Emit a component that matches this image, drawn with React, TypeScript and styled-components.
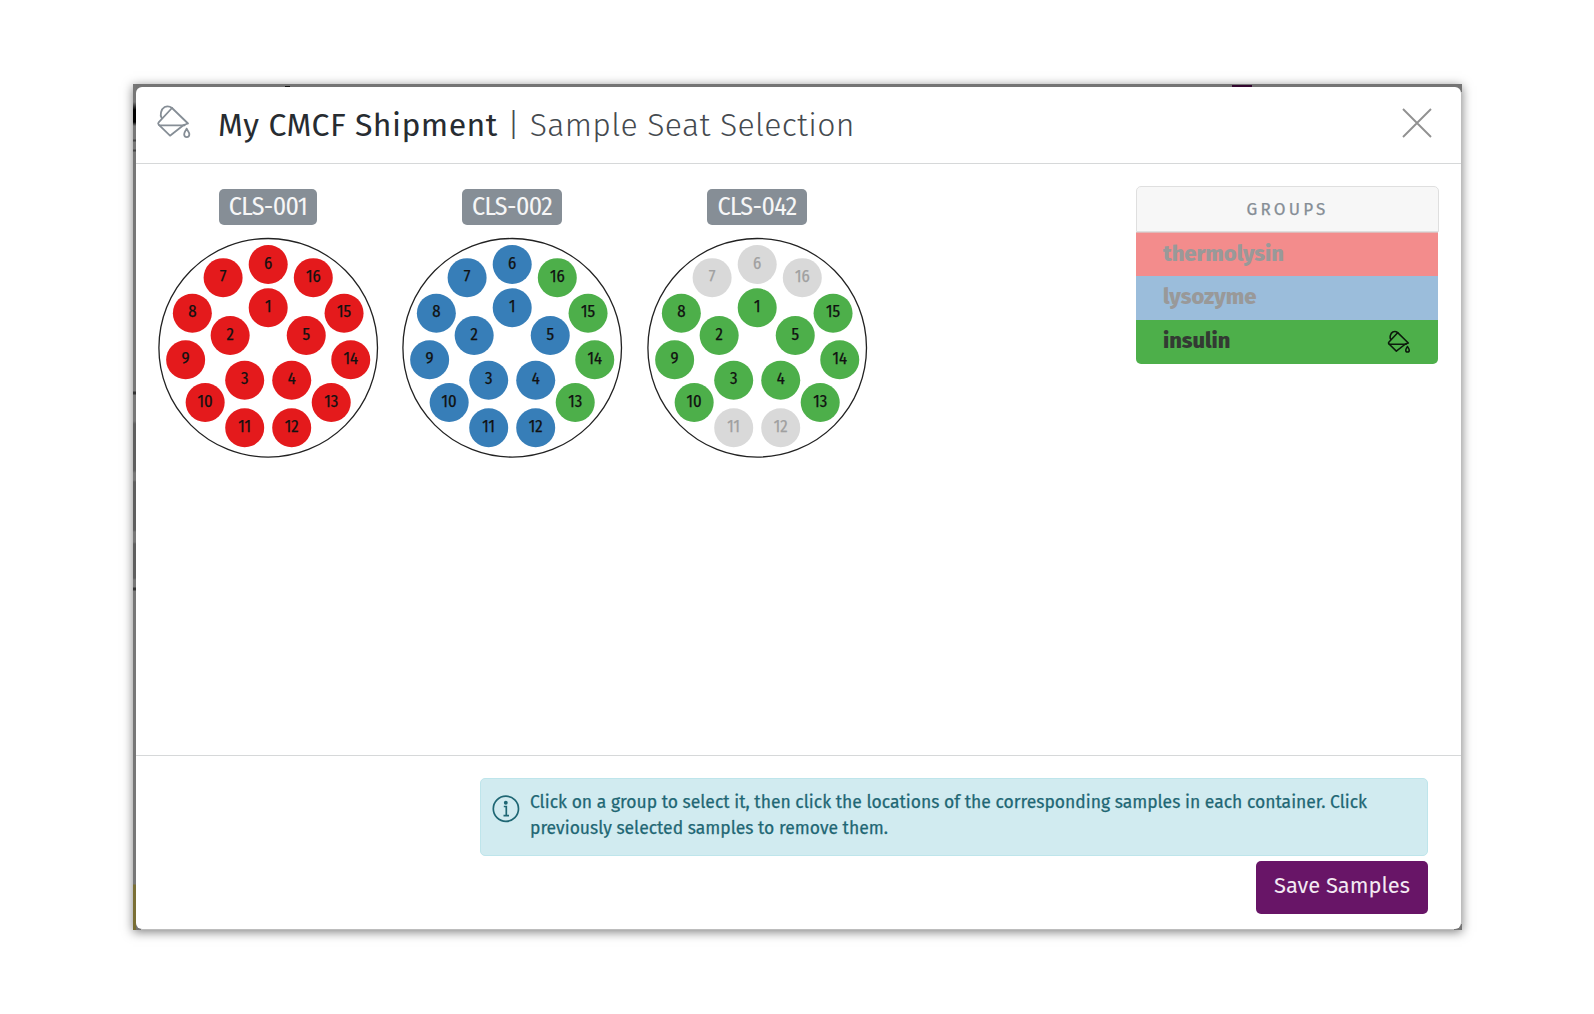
import React from "react";
import styled, { createGlobalStyle } from "styled-components";

const GlobalStyle = createGlobalStyle`
  *, *::before, *::after { box-sizing: border-box; }
  html, body, #root { height: 100%; }
  body {
    margin: 0;
    background: #fff;
    color: #272c31;
    font-family: "Fira Sans", "Noto Sans", sans-serif;
  }
  h1, p { margin: 0; }
`;

const Page = styled.div`
  height: 1014px;
  padding: 84px 0 0 133px;
`;

/* Sliver of the dimmed page that shows behind the dialog. */
const Backdrop = styled.div`
  width: 1329px;
  height: 846px;
  padding: 3px 1px 1px 3px;
  box-shadow: 0 2px 10px rgba(0, 0, 0, 0.5);
  background:
    linear-gradient(#bdbdbd, #bdbdbd) 100% 8px / 1px 832px no-repeat,
    linear-gradient(#bdbdbd, #bdbdbd) 8px 100% / 1313px 1px no-repeat,
    linear-gradient(#111, #111) 152px 2px / 5px 1px no-repeat,
    linear-gradient(#32072f, #32072f) 1099px 1px / 20px 2px no-repeat,
    linear-gradient(
        #777 0 18px, #000 26px 38px, #777 42px 55px, #444 56px 57px, #777 58px 65px,
        #444 66px 67px, #777 68px 307px, #333 308px 310px, #777 311px 337px,
        #5e5e5e 340px 386px, #777 389px 396px, #5e5e5e 398px 446px, #777 448px 458px,
        #5e5e5e 460px 494px, #777 496px 503px, #333 504px 506px, #777 507px 800px,
        #7a6f35 801px
      )
      0 0 / 3px 100% no-repeat,
    #747474;
`;

const Dialog = styled.section`
  display: flex;
  flex-direction: column;
  height: 100%;
  border-radius: 6px;
  background: #fff;
  overflow: hidden;
`;

const Header = styled.header`
  display: flex;
  align-items: center;
  height: 77px;
  padding: 0 29.5px 0 20px;
  border-bottom: 1px solid #d6d8d9;
`;

const HeaderIcon = styled.span`
  display: flex;
  width: 36px;
  margin-top: -6px;
  color: #868e96;
`;

const Title = styled.h1`
  flex: 1;
  margin-left: 26px;
  font-size: 32px;
  line-height: 40px;
  font-weight: 400;
  letter-spacing: 0.42px;
  white-space: nowrap;
`;

const Subtitle = styled.span`
  margin-left: 0.5px;
  font-weight: 300;
  color: #454a4f;
  letter-spacing: 0.32px;
`;

const CloseButton = styled.button`
  display: flex;
  padding: 0;
  margin-top: -4px;
  border: 0;
  background: none;
`;

const Body = styled.main`
  display: flex;
  justify-content: space-between;
  flex: 1;
  padding: 22px 22px 0 10px;
`;

const Containers = styled.div`
  display: flex;
  padding-top: 3px;
`;

const Container = styled.div`
  display: flex;
  flex-direction: column;
  align-items: center;
  gap: 12px;
  width: 244px;
  &:last-child {
    margin-left: 1px;
  }
`;

const Badge = styled.div`
  height: 36px;
  padding: 0 10px;
  border-radius: 5px;
  background: #868e96;
  color: #f6f6f6;
  font-family: "Fira Sans Condensed", "Fira Sans", "Noto Sans", sans-serif;
  font-size: 25.8px;
  line-height: 36px;
  letter-spacing: -0.6px;
`;

const Puck = styled.svg`
  display: block;
  width: 222px;
  height: 222px;
`;

const SeatLabel = styled.text`
  font-family: "Fira Sans Condensed", "Fira Sans", "Noto Sans", sans-serif;
  font-size: 16.6px;
  text-anchor: middle;
  stroke: currentColor;
  stroke-width: 0.25px;
`;

const Groups = styled.aside`
  align-self: flex-start;
  width: 303px;
`;

const GroupsTitle = styled.div`
  height: 46px;
  padding-top: 1px;
  border: 1px solid #dfdfdf;
  border-radius: 5px 5px 0 0;
  background: #f7f7f7;
  color: #868e96;
  font-size: 17px;
  line-height: 44px;
  letter-spacing: 3.25px;
  text-align: center;
  -webkit-text-stroke: 0.25px currentColor;
`;

const Group = styled.div<{ $color: string; $active?: boolean }>`
  display: flex;
  align-items: center;
  justify-content: space-between;
  height: 44px;
  margin-right: 1px;
  padding: 0 27px 3px 27px;
  background: ${(p) => p.$color};
  color: ${(p) => (p.$active ? "#333a33" : "#999")};
  font-size: 22px;
  font-weight: 800;
  letter-spacing: -0.02px;
  &:nth-child(2) {
    padding-bottom: 2px;
    border-top: 1px solid #dfb9b9;
  }
  &:last-child {
    border-radius: 0 0 5px 5px;
  }
  svg {
    margin-top: 3px;
    color: #0c1a0c;
  }
`;

const Footer = styled.footer`
  display: flex;
  flex-direction: column;
  align-items: flex-end;
  gap: 5px;
  height: 174px;
  padding: 22px 33px 0 0;
  border-top: 1px solid #d6d8d9;
`;

const Notice = styled.div`
  display: flex;
  width: 948px;
  height: 78px;
  padding: 10px 12px 0 11px;
  border: 1px solid #bee5eb;
  border-radius: 5px;
  background: #d1ebf0;
  color: #1f6774;
  svg {
    flex: none;
    margin-top: 6px;
  }
`;

const NoticeText = styled.p`
  flex: 1;
  margin: 0.5px 0 0 10px;
  font-size: 17.5px;
  line-height: 26.5px;
  -webkit-text-stroke: 0.25px currentColor;
`;

const SaveButton = styled.button`
  width: 172px;
  height: 53px;
  padding: 0 0 3px;
  border: 0;
  border-radius: 5px;
  background: #681567;
  color: #f3e9f3;
  font: 400 21.9px/50px "Fira Sans", "Noto Sans", sans-serif;
`;

const PaintBucket = ({ size, stroke = 5.4 }: { size: number; stroke?: number }) => (
  <svg width={size} height={size} viewBox="2 0 108 108" fill="none" stroke="currentColor" strokeWidth={stroke} strokeLinejoin="round" strokeLinecap="round">
    <path d="M50 12 98 58.500 85 63 44 95 10 62Q7 59 10 55Z" />
    <path d="M12 64H88" />
    <path d="M19 42C13 34 17 15 28 9C37 5 45 8 50 12" />
    <path d="M94 74C91 81 86.500 84 86.500 91C86.500 102 102 102 102 91C102 84 97 81 94 74Z" />
  </svg>
);

const RED = "#e41a1c";
const BLUE = "#377eb8";
const GREEN = "#4daf4a";
const EMPTY = "#d9d9d9";

const ring = (first: number, count: number, radius: number) =>
  Array.from({ length: count }, (_, i) => {
    const angle = (2 * Math.PI * i) / count;
    return { seat: first + i, x: 111.2 - radius * Math.sin(angle), y: 110.8 - radius * Math.cos(angle) };
  });

const SEATS = [...ring(1, 5, 40), ...ring(6, 11, 83.4)];

const CONTAINERS = [
  { name: "CLS-001", colorOf: () => RED },
  { name: "CLS-002", colorOf: (n: number) => (n >= 13 ? GREEN : BLUE) },
  { name: "CLS-042", colorOf: (n: number) => ([6, 7, 11, 12, 16].includes(n) ? EMPTY : GREEN) },
];

export default function App() {
  return (
    <Page>
      <GlobalStyle />
      <Backdrop>
        <Dialog>
          <Header>
            <HeaderIcon>
              <PaintBucket size={36} />
            </HeaderIcon>
            <Title>
              My CMCF Shipment <Subtitle>| Sample Seat Selection</Subtitle>
            </Title>
            <CloseButton aria-label="Close">
              <svg width="30" height="30" viewBox="0 0 30 30" stroke="#919191" strokeWidth="1.900">
                <path d="M1 1 29 29M29 1 1 29" />
              </svg>
            </CloseButton>
          </Header>
          <Body>
            <Containers>
              {CONTAINERS.map(({ name, colorOf }) => (
                <Container key={name}>
                  <Badge>{name}</Badge>
                  <Puck viewBox="0 0 222 222">
                    <circle cx="111.200" cy="110.800" r="109.300" fill="none" stroke="#222" strokeWidth="1.300" />
                    {SEATS.map(({ seat, x, y }) => {
                      const color = colorOf(seat);
                      const ink = color === EMPTY ? "#a0a0a0" : "#111";
                      return (
                        <g key={seat}>
                          <circle cx={x} cy={y} r="19.500" fill={color} />
                          <SeatLabel x={x} y={y + 4.2} fill={ink} color={ink}>
                            {seat}
                          </SeatLabel>
                        </g>
                      );
                    })}
                  </Puck>
                </Container>
              ))}
            </Containers>
            <Groups>
              <GroupsTitle>GROUPS</GroupsTitle>
              <Group $color="#f38c8c">thermolysin</Group>
              <Group $color="#9bbddb">lysozyme</Group>
              <Group $color={GREEN} $active>
                insulin
                <PaintBucket size={24} stroke={7} />
              </Group>
            </Groups>
          </Body>
          <Footer>
            <Notice>
              <svg width="28" height="28" viewBox="0 0 28 28" fill="none" stroke="currentColor" strokeWidth="1.700">
                <circle cx="13.900" cy="13.800" r="12.600" />
                <path d="M11.800 11.500H14.300V20.500M11.500 20.700H17" />
                <circle cx="13.800" cy="7.800" r="1.100" fill="currentColor" />
              </svg>
              <NoticeText>
                Click on a group to select it, then click the locations of the corresponding samples in each container. Click
                previously selected samples to remove them.
              </NoticeText>
            </Notice>
            <SaveButton>Save Samples</SaveButton>
          </Footer>
        </Dialog>
      </Backdrop>
    </Page>
  );
}
